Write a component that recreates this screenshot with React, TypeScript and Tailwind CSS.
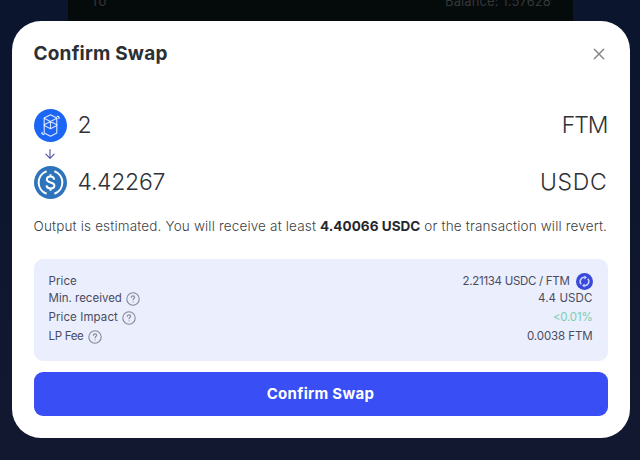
import * as React from 'react';
import { clsx } from 'clsx';

function FantomLogo() {
    return (
        <svg viewBox="0 0 33 33" className="h-[33px] w-[33px]" fill="none">
            <circle cx="16.5" cy="16.5" r="16.5" fill="#1b66f5" />
            <g stroke="#fff" strokeWidth="1.1" strokeLinejoin="round" strokeLinecap="round">
                <path d="M10.2 8.9 16.5 5.7l6.3 3.2v15l-6.3 3.4-6.3-3.4z" opacity=".85" />
                <path d="M10.2 9.3l12.6 6.5M22.8 9.3l-12.6 6.5M10.2 16.4l6.3 3.3 6.3-3.3M16.5 12.9v6.8" opacity=".8" />
                <path d="M23.2 7.2l1.8.9v1.3M9.8 25.6 8 24.7v-1.3" />
            </g>
        </svg>
    );
}

function UsdcLogo() {
    return (
        <svg viewBox="0 0 33 33" className="h-[33px] w-[33px]" fill="none">
            <circle cx="16.5" cy="16.5" r="16.5" fill="#2d74bd" />
            <g stroke="#fff" strokeWidth="2">
                <path d="M12.6 5.2a12 12 0 0 0 0 22.6M20.4 5.2a12 12 0 0 1 0 22.6" />
                <path d="M20.2 13.6c-.3-2-1.7-3-3.7-3-2.2 0-3.7 1.2-3.7 2.9 0 4 7.6 1.8 7.6 6 0 1.8-1.6 2.9-3.9 2.9s-3.8-1-4-3M16.5 8.2v2.6M16.5 22.2v2.6" />
            </g>
        </svg>
    );
}

function HelpIcon() {
    return (
        <svg viewBox="0 0 14 14" className="h-3.5 w-3.5" fill="none" stroke="#858999" strokeWidth="1.1" strokeLinecap="round">
            <circle cx="7" cy="7" r="6.2" />
            <path d="M5.3 5.4c.1-1 .8-1.5 1.7-1.5 1 0 1.7.6 1.7 1.4 0 1.2-1.6 1.2-1.6 2.5" />
            <path d="M7.1 9.9v.1" />
        </svg>
    );
}

function RefreshButton() {
    return (
        <button aria-label="Invert price" className="ml-1.5 h-[17px] w-[17px]">
            <svg viewBox="0 0 17 17" className="h-[17px] w-[17px]" fill="none">
                <circle cx="8.5" cy="8.5" r="8.5" fill="#3849dc" />
                <g stroke="#cfd6ff" strokeWidth="1.5">
                    <path d="M5.2 11.2A4.1 4.1 0 0 1 8.8 4.4M11.8 5.8a4.1 4.1 0 0 1-3.6 6.8" />
                </g>
                <path d="M8.4 2.4 10.9 4.5 8.4 6.6zM8.6 10.4 6.1 12.5 8.6 14.6z" fill="#cfd6ff" />
            </svg>
        </button>
    );
}

type TokenRowProps = {
    logo: React.ReactNode;
    amount: string;
    symbol: string;
    amountClass?: string;
    symbolClass?: string;
};

function TokenRow({ logo, amount, symbol, amountClass, symbolClass }: TokenRowProps) {
    return (
        <div className="flex h-[33px] items-center text-[23px] font-light text-[#303238]">
            {logo}
            <span className={clsx('ml-[11px]', amountClass)}>{amount}</span>
            <span className={clsx('ml-auto', symbolClass)}>{symbol}</span>
        </div>
    );
}

const details = [
    { label: 'Price', value: '2.21134 USDC / FTM', refresh: true, row: 'h-[17px]', labelClass: 'tracking-[0.1px]', valueClass: 'tracking-[-0.3px]' },
    { label: 'Min. received', value: '4.4 USDC', help: true, row: 'h-[18px]', labelClass: '', valueClass: 'tracking-[0.1px]' },
    { label: 'Price Impact', value: '<0.01%', help: true, row: 'h-[19px]', labelClass: 'tracking-[0.1px]', valueClass: 'tracking-[-0.2px] text-[#7bcdb0]' },
    { label: 'LP Fee', value: '0.0038 FTM', help: true, row: 'h-[19px]', labelClass: 'tracking-[-0.3px]', valueClass: 'tracking-[-0.1px]' },
];

export default function App() {
    return (
        <div className="relative h-[460px] w-[640px] overflow-hidden bg-linear-to-b from-[#0b152e] to-[#12182f] font-['Inter','Liberation_Sans',sans-serif]">
            <div className="ml-[68px] flex h-10 w-[505px] items-start justify-between bg-[#050a0b] pr-[22px] pl-[23px] text-[13px] text-[#34383a]">
                <span className="-mt-2">To</span>
                <span className="-mt-2 tracking-[0.1px]">Balance: 1.57628</span>
            </div>

            <div className="absolute inset-0 pt-[21px] pl-[11.5px]">
                <div role="dialog" className="flex h-[417px] w-[618px] flex-col rounded-[29px] bg-white px-[22px] pt-[18px]">
                    <div className="flex h-[30px] shrink-0 items-center justify-between">
                        <h2 className="text-[19px] font-bold tracking-[0.2px] text-[#2c2f34]">Confirm Swap</h2>
                        <button aria-label="Close" className="mr-[3px]">
                            <svg viewBox="0 0 12 12" className="h-3 w-3" stroke="#85878b" strokeWidth="1.5" strokeLinecap="round">
                                <path d="M1.3 1.3l9.4 9.4M10.7 1.3 1.3 10.7" />
                            </svg>
                        </button>
                    </div>

                    <div className="mt-10">
                        <TokenRow logo={<FantomLogo />} amount="2" symbol="FTM" symbolClass="tracking-[-1px]" />
                        <div className="flex h-6 w-[33px] items-center justify-center">
                            <svg viewBox="0 0 10 10" className="h-2.5 w-2.5" fill="none" stroke="#4c51a5" strokeWidth="1.1" strokeLinecap="round" strokeLinejoin="round">
                                <path d="M5 .6v8.6M.9 5.2 5 9.3l4.1-4.1" />
                            </svg>
                        </div>
                        <TokenRow logo={<UsdcLogo />} amount="4.42267" symbol="USDC" amountClass="tracking-[-0.3px]" symbolClass="tracking-[0.7px]" />
                    </div>

                    <p className="mt-[15px] h-6 text-[13.5px] leading-6 whitespace-nowrap text-[#3d3f45]">
                        <span className="font-light tracking-[0.16px]">Output is estimated. You will receive at least </span>
                        <b className="font-bold tracking-[0.05px] text-[#25272c]">4.40066 USDC</b>
                        <span className="font-light tracking-[0.16px]"> or the transaction will revert.</span>
                    </p>

                    <div className="mt-[21px] h-[102px] rounded-[9px] bg-[#ebeefd] px-[15px] pt-3.5 text-[11.5px] text-[#494c60]">
                        {details.map((item) => (
                            <div key={item.label} className={clsx('flex items-center', item.row)}>
                                <span className={item.labelClass}>{item.label}</span>
                                {item.help && (
                                    <span className="ml-1">
                                        <HelpIcon />
                                    </span>
                                )}
                                <span className={clsx('ml-auto', item.valueClass)}>{item.value}</span>
                                {item.refresh && <RefreshButton />}
                            </div>
                        ))}
                    </div>

                    <button className="mt-[11px] h-11 rounded-[9px] bg-[#394ff5] text-[15px] font-bold tracking-[0.3px] text-white">Confirm Swap</button>
                </div>
            </div>
        </div>
    );
}
